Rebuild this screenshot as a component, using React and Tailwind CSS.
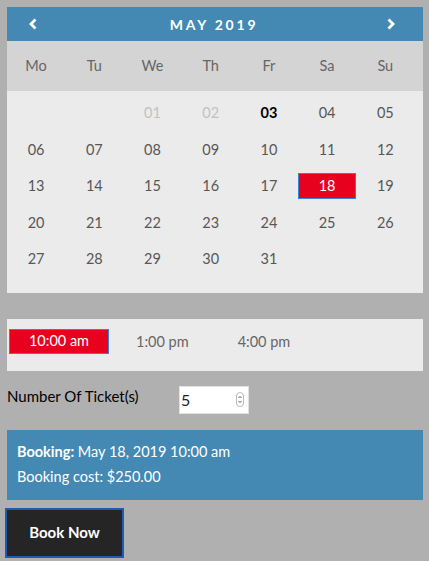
import React from 'react';

const days = [
  ['', '', '01', '02', '03', '04', '05'],
  ['06', '07', '08', '09', '10', '11', '12'],
  ['13', '14', '15', '16', '17', '18', '19'],
  ['20', '21', '22', '23', '24', '25', '26'],
  ['27', '28', '29', '30', '31', '', ''],
];

const weekdays = ['Mo', 'Tu', 'We', 'Th', 'Fr', 'Sa', 'Su'];

const DayCell = ({ d }) => {
  if (!d) return <div className="h-[36.5px]" />;
  if (d === '18') {
    return (
      <div className="h-[36.5px] flex items-center">
        <div className="w-full h-[26px] bg-[#e8001f] border border-[#3a7fe0] text-white flex items-center justify-center">
          {d}
        </div>
      </div>
    );
  }
  let color = 'text-[#575757]';
  if (d === '01' || d === '02') color = 'text-[#c2c2c2]';
  if (d === '03') color = 'text-black font-bold';
  return <div className={`h-[36.5px] flex items-center justify-center ${color}`}>{d}</div>;
};

export default function App() {
  return (
    <div className="min-h-[561px] bg-[#b0b0b0] pt-[7px] px-[7px] text-[14.5px]" style={{ fontFamily: 'Lato, "Noto Sans", sans-serif' }}>
      {/* Calendar */}
      <div className="w-[416px]">
        <div className="h-[34px] bg-[#4389b3] flex items-center justify-between px-[21px] text-white">
          <svg width="10" height="12" viewBox="0 0 10 12">
            <path d="M7.5 1.5 L3 6 L7.5 10.5" fill="none" stroke="white" strokeWidth="2.8" />
          </svg>
          <span className="font-bold tracking-[0.2em] text-[14px] pl-[4px]">MAY 2019</span>
          <svg width="10" height="12" viewBox="0 0 10 12" className="mr-[6px]">
            <path d="M2.5 1.5 L7 6 L2.5 10.5" fill="none" stroke="white" strokeWidth="2.8" />
          </svg>
        </div>
        <div className="h-[50px] bg-[#d4d4d4] grid grid-cols-7 pr-[8.6px] items-center text-[#666]">
          {weekdays.map((w) => (
            <div key={w} className="text-center">{w}</div>
          ))}
        </div>
        <div className="bg-[#ebebeb] pt-[4px] pb-[15px] pr-[8.6px] grid grid-cols-7">
          {days.flat().map((d, i) => (
            <DayCell key={i} d={d} />
          ))}
        </div>
      </div>

      {/* Time slots */}
      <div className="mt-[26px] w-[416px] h-[52px] bg-[#ebebeb] flex items-start pt-[10px] pl-[2px] text-[#666]">
        <div className="w-[100px] h-[25px] bg-[#e8001f] border border-[#3a7fe0] text-white flex items-center justify-center">
          10:00 am
        </div>
        <div className="ml-[27px] leading-[25px]">1:00 pm</div>
        <div className="ml-[49px] leading-[25px]">4:00 pm</div>
      </div>

      {/* Tickets */}
      <div className="mt-[15px] flex items-start">
        <div className="text-black w-[172px] text-[15px] leading-[20px]">Number Of Ticket(s)</div>
        <div className="w-[70px] h-[28px] bg-white border border-[#e2e2e2] flex items-center justify-between pl-[1px] pr-[4px]">
          <span className="text-[#222] text-[16px]">5</span>
          <span className="w-[8px] h-[15px] rounded-full border border-[#bbb] flex flex-col items-center justify-center">
            <svg width="6" height="11" viewBox="0 0 6 11">
              <path d="M1.5 4 L3 2.5 L4.5 4" fill="none" stroke="#555" strokeWidth="1" />
              <path d="M1.5 7 L3 8.5 L4.5 7" fill="none" stroke="#555" strokeWidth="1" />
            </svg>
          </span>
        </div>
      </div>

      {/* Booking info */}
      <div className="mt-[16px] w-[416px] h-[70px] bg-[#4389b3] text-white px-[10px] pt-[9px] text-[14.5px] leading-[25px]">
        <div><span className="font-bold">Booking:</span> May 18, 2019 10:00 am</div>
        <div>Booking cost: $250.00</div>
      </div>

      {/* Button */}
      <button className="mt-[8px] -ml-[2px] w-[119px] h-[50px] bg-[#252525] border-2 border-[#1f5bb5] text-white font-bold text-[15px]">
        Book Now
      </button>
    </div>
  );
}
